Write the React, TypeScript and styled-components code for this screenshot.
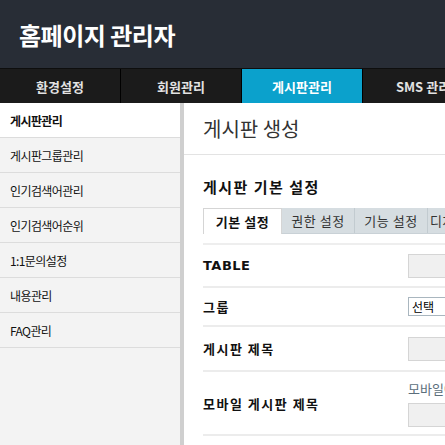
import React from 'react';
import styled, { createGlobalStyle, css } from 'styled-components';

const GlobalStyle = createGlobalStyle`
    *, *::before, *::after {
        box-sizing: border-box;
    }
    html, body {
        margin: 0;
        padding: 0;
        overflow: hidden;
    }
    body {
        font-family: 'Noto Sans CJK KR', 'Noto Sans', 'Liberation Sans', sans-serif;
        color: #111;
        background: #fff;
    }
`;

const menus = ['환경설정', '회원관리', '게시판관리', 'SMS 관리'];
const sideMenus = ['게시판관리', '게시판그룹관리', '인기검색어관리', '인기검색어순위', '1:1문의설정', '내용관리', 'FAQ관리'];
const tabs = ['기본 설정', '권한 설정', '기능 설정', '디자인/양식'];

const App = () => (
    <>
        <GlobalStyle/>
        <Page>
            <Header>
                <Logo>홈페이지 관리자</Logo>
            </Header>
            <Gnb>
                {menus.map(menu => (
                    <GnbItem key={menu} $active={menu === '게시판관리'}>{menu}</GnbItem>
                ))}
            </Gnb>
            <Body>
                <Side>
                    {sideMenus.map((item, index) => (
                        <SideItem key={item} $active={index === 0}>{item}</SideItem>
                    ))}
                </Side>
                <Main>
                    <PageTitle>게시판 생성</PageTitle>
                    <Section>
                        <SectionTitle>게시판 기본 설정</SectionTitle>
                        <TabBar>
                            {tabs.map((tab, index) => (
                                <Tab key={tab} $active={index === 0}>{tab}</Tab>
                            ))}
                        </TabBar>
                        <Form>
                            <FormRow $height={43}>
                                <Label $latin>TABLE</Label>
                                <Field><TextBox/></Field>
                            </FormRow>
                            <FormRow $height={39}>
                                <Label>그룹</Label>
                                <Field><SelectBox>선택</SelectBox></Field>
                            </FormRow>
                            <FormRow $height={45}>
                                <Label>게시판 제목</Label>
                                <Field><TextBox/></Field>
                            </FormRow>
                            <FormRow $height={64}>
                                <Label>모바일 게시판 제목</Label>
                                <Field>
                                    <Help>모바일에서 보여지는 게시판 제목</Help>
                                    <TextBox/>
                                </Field>
                            </FormRow>
                        </Form>
                    </Section>
                </Main>
            </Body>
        </Page>
    </>
);

const Page = styled.div`
    width: 700px;
    min-height: 445px;
    display: flex;
    flex-direction: column;
`;

const Header = styled.header`
    height: 68px;
    background: #282d36;
    display: flex;
    align-items: center;
    padding-left: 19px;
`;

const Logo = styled.h1`
    margin: 0;
    color: #fff;
    font-size: 24px;
    font-weight: 700;
    letter-spacing: -0.5px;
`;

const Gnb = styled.nav`
    display: flex;
    height: 35px;
    background: #1b1b1b;
    border-top: 1px solid #0e0e0e;
`;

const GnbItem = styled.div<{ $active: boolean }>`
    width: 121px;
    border-right: 1px solid #000;
    display: flex;
    align-items: center;
    justify-content: center;
    color: #e2e2e2;
    font-size: 13px;
    font-weight: 700;
    ${({ $active }) => $active && css`
        background: #0ba1cc;
        color: #fff;
    `}
`;

const Body = styled.div`
    display: flex;
    flex: 1;
    min-height: 342px;
`;

const Side = styled.aside`
    width: 184px;
    background: #f3f3f3;
    border-right: 4px solid #cfcfcf;
    display: flex;
    flex-direction: column;
`;

const SideItem = styled.div<{ $active: boolean }>`
    height: 35px;
    display: flex;
    align-items: center;
    padding-left: 10px;
    border-bottom: 1px solid #dcdcdc;
    font-size: 12px;
    letter-spacing: -0.6px;
    color: #111;
    ${({ $active }) => $active && css`
        background: #fff;
        font-weight: 700;
    `}
`;

const Main = styled.main`
    flex: 1;
    background: #fff;
`;

const PageTitle = styled.h2`
    margin: 0;
    height: 52px;
    padding: 0 0 0 19px;
    display: flex;
    align-items: center;
    border-bottom: 1px solid #e3e3e3;
    font-size: 20px;
    font-weight: 400;
    color: #333;
`;

const Section = styled.section`
    padding: 23px 0 0 19px;
`;

const SectionTitle = styled.h3`
    margin: 0 0 12px;
    font-size: 15px;
    font-weight: 700;
    letter-spacing: 1.5px;
    color: #111;
    line-height: 18px;
`;

const TabBar = styled.div`
    display: flex;
    height: 26px;
    border-bottom: 1px solid #c9d1d6;
    margin-bottom: 9px;
`;

const Tab = styled.div<{ $active: boolean }>`
    width: 73px;
    display: flex;
    align-items: center;
    justify-content: center;
    background: #d6dde1;
    border-right: 1px solid #c2cbd0;
    font-size: 13px;
    letter-spacing: 0.5px;
    color: #333;
    ${({ $active }) => $active && css`
        width: 79px;
        background: #fff;
        border: 1px solid #d5d5d5;
        border-bottom: none;
        height: 26px;
        font-weight: 700;
        color: #111;
    `}
`;

const Form = styled.div`
    border-top: 2px solid #eeeeee;
`;

const FormRow = styled.div<{ $height: number }>`
    height: ${({ $height }) => $height}px;
    display: grid;
    grid-template-columns: 205px 1fr;
    align-items: center;
    border-bottom: 2px solid #ececec;
`;

const Label = styled.div<{ $latin?: boolean }>`
    font-size: 13px;
    font-weight: 700;
    letter-spacing: 1.5px;
    color: #111;
    ${({ $latin }) => $latin && css`
        font-family: 'DejaVu Sans', sans-serif;
        letter-spacing: 0.5px;
    `}
`;

const Field = styled.div`
    display: flex;
    flex-direction: column;
    gap: 5px;
`;

const TextBox = styled.div`
    width: 200px;
    height: 24px;
    background: #f0f0f0;
    border: 1px solid #d5d5d5;
`;

const SelectBox = styled.div`
    width: 120px;
    height: 19px;
    border: 1px solid #a9b6bf;
    background: #fff;
    padding-left: 3px;
    font-size: 12px;
    line-height: 17px;
    color: #000;
`;

const Help = styled.div`
    font-size: 13px;
    color: #5b6e7b;
    white-space: nowrap;
`;

export default App;
